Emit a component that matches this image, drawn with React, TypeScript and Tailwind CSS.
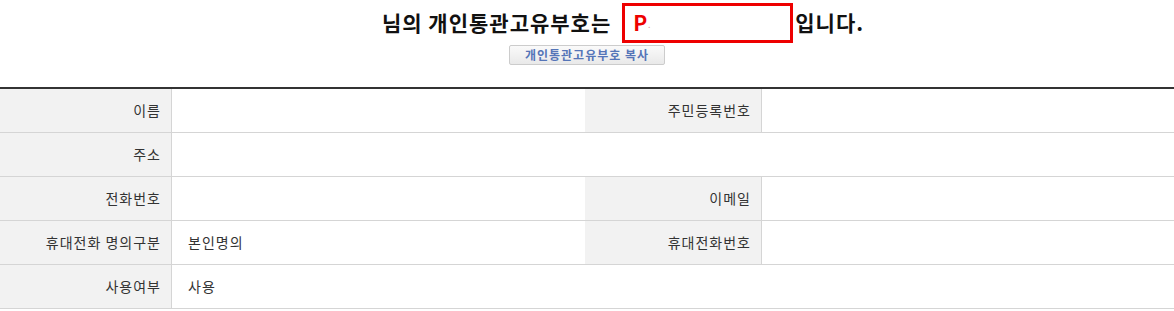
import React from 'react';

const font = { fontFamily: '"Noto Sans CJK KR", "Noto Sans", sans-serif' };

const Label = ({ children }: any) => (
  <div className="h-[43px] flex items-center justify-end pr-[10px] bg-[#f2f2f2] border-r border-[#d5d5d5] text-[14px] tracking-[1px] text-[#333]">
    {children}
  </div>
);

const Value = ({ children, wide }: any) => (
  <div className={`h-[43px] flex items-center pl-[16px] text-[14px] tracking-[1px] text-[#333] ${wide ? 'col-span-3' : ''}`}>
    {children}
  </div>
);

export default function App() {
  const rows = [
    [['이름', ''], ['주민등록번호', '']],
    [['주소', '']],
    [['전화번호', ''], ['이메일', '']],
    [['휴대전화 명의구분', '본인명의'], ['휴대전화번호', '']],
    [['사용여부', '사용']],
  ];
  return (
    <div className="w-[1174px] h-[311px] bg-white" style={font}>
      <div className="h-[87px] flex flex-col items-center pt-[3px]">
        <div className="flex items-center pl-[72px] text-[21px] font-bold text-[#111] h-[40px] tracking-[1px]">
          <span>님의 개인통관고유부호는</span>
          <span className="ml-[11px] w-[171px] h-[40px] border-[3px] border-[#e00] flex items-center pl-[8px] text-[#e00]">
            P<span className="text-[6px] text-[#d9a0a0] self-end mb-[10px]">.</span>
          </span>
          <span className="ml-[2px]">입니다.</span>
        </div>
        <button className="mt-[2px] h-[20px] w-[156px] border border-[#ccc] rounded-[2px] bg-gradient-to-b from-[#fafafa] to-[#e9e9e9] text-[12px] tracking-[1px] font-bold text-[#5575b8] leading-none">
          개인통관고유부호 복사
        </button>
      </div>
      <div className="border-t-2 border-[#333] grid grid-cols-[172px_413px_177px_412px]">
        {rows.map((r, i) => (
          <div key={i} className="contents">
            {r.map(([l, v], j) => (
              <React.Fragment key={j}>
                <Label>{l}</Label>
                <Value wide={r.length === 1}>{v}</Value>
              </React.Fragment>
            ))}
            <div className="col-span-4 h-px bg-[#d5d5d5]" />
          </div>
        ))}
      </div>
    </div>
  );
}
